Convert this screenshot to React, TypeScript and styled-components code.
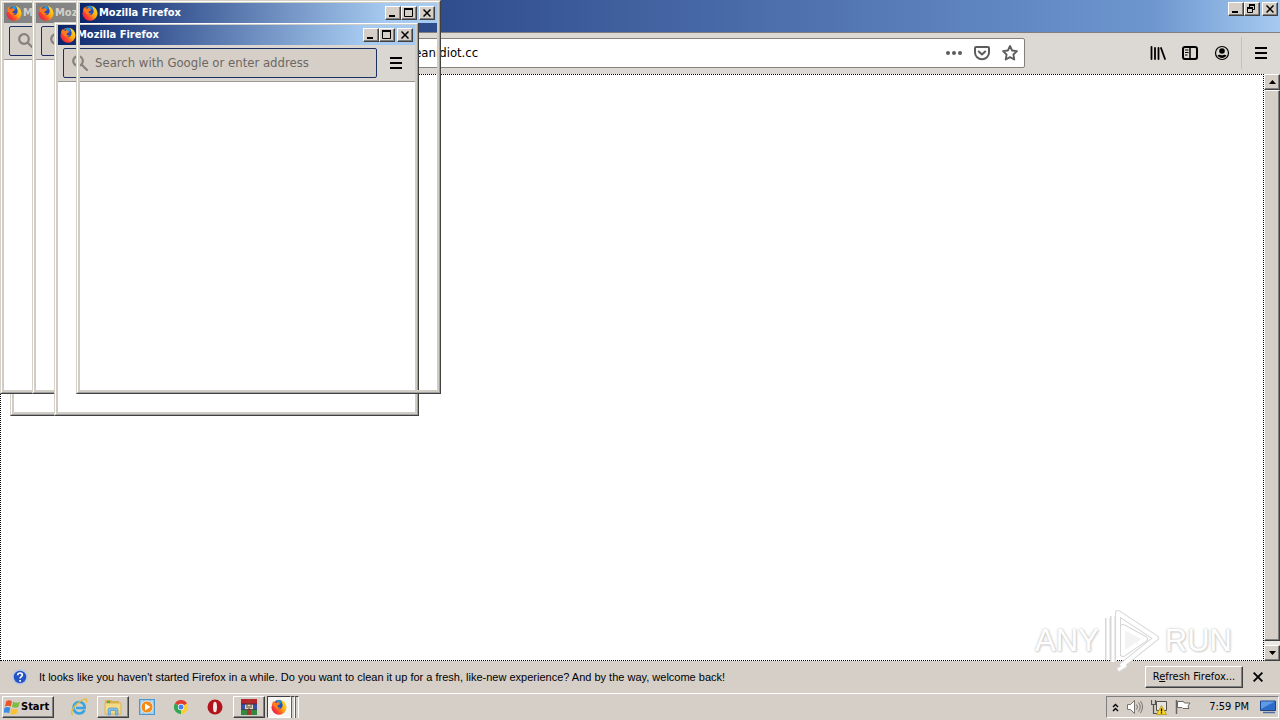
import React, { useId } from 'react';
import styled, { createGlobalStyle, css } from 'styled-components';

const FACE = '#d6cfc8';
const TAHOMA = "'DejaVu Sans Condensed', 'DejaVu Sans', sans-serif";

const GlobalStyle = createGlobalStyle`
  *, *::before, *::after { box-sizing: border-box; }
  body { margin: 0; background: #fff; font: 11px/14px ${TAHOMA}; color: #000; overflow: hidden; }
  button, input { font: inherit; color: inherit; }
`;

const raised = css`
  border: 1px solid;
  border-color: #fff #404040 #404040 #fff;
  box-shadow: inset -1px -1px #808080;
`;

const Desktop = styled.div`
  position: relative;
  display: flex;
  flex-direction: column;
  height: 100vh;
  overflow: hidden;
`;

/* ---------- main browser window ---------- */

const Browser = styled.main`
  flex: 1;
  min-height: 0;
  display: flex;
  flex-direction: column;
`;

const BrowserTitle = styled.header`
  display: flex;
  justify-content: flex-end;
  height: 33px;
  padding: 2px 2px 0 0;
  border-bottom: 1px solid #808080;
  background: linear-gradient(to right, #0a246a 0, #2f4c8c 34%, #5d82bd 75%, #6d96cf 90%, #a6caf0 100%);
`;

const Controls = styled.div`
  display: flex;
  margin-left: auto;
`;

const CaptionButton = styled.button<{ $gap?: boolean }>`
  ${raised}
  display: grid;
  place-items: center;
  width: 16px;
  height: 14px;
  padding: 0;
  margin-left: ${(p) => (p.$gap ? 2 : 0)}px;
  background: ${FACE};
`;

const NavBar = styled.nav`
  display: flex;
  align-items: center;
  height: 41px;
  padding: 0 9px 1px 160px;
  background: #dcd8d3;
`;

const UrlBox = styled.div`
  flex: 1;
  display: flex;
  align-items: center;
  gap: 8px;
  height: 30px;
  padding: 0 4px 0 220px;
  border: 1px solid #858079;
  border-radius: 2px;
  background: #fff;
  color: #5c5c5c;
`;

const UrlInput = styled.input`
  flex: 1;
  min-width: 0;
  padding: 0;
  border: 0;
  outline: 0;
  background: none;
  font-size: 13px;
  color: #000;
`;

const IconButton = styled.button`
  display: grid;
  place-items: center;
  width: 20px;
  height: 24px;
  padding: 0;
  border: 0;
  background: none;
`;

const Tools = styled.div`
  display: flex;
  align-items: center;
  gap: 12px;
  padding: 0 9px 0 123px;
`;

const MenuSlot = styled.div`
  height: 32px;
  display: flex;
  align-items: center;
  padding-left: 9px;
  border-left: 1px solid #c4c0ba;
`;

const Viewport = styled.section`
  flex: 1;
  min-height: 0;
  display: flex;
`;

const Page = styled.div`
  flex: 1;
  border: 1px dotted #000;
  background: #fff;
`;

const ScrollBar = styled.div`
  display: flex;
  flex-direction: column;
  width: 16px;
  background: #ebe8e4;
`;

const ScrollButton = styled.button`
  ${raised}
  display: grid;
  place-items: center;
  width: 16px;
  height: 16px;
  padding: 0;
  background: ${FACE};
`;

const Thumb = styled.div`
  ${raised}
  flex: 1;
  margin-bottom: 4px;
  background: ${FACE};
`;

const Notice = styled.aside`
  display: flex;
  align-items: center;
  height: 32px;
  padding: 0 12px;
  background: ${FACE};
`;

const NoticeText = styled.p`
  flex: 1;
  margin: 0 0 0 11px;
  font-family: 'Liberation Sans', ${TAHOMA};
  white-space: nowrap;
`;

const RefreshButton = styled.button`
  ${raised}
  height: 22px;
  width: 98px;
  padding: 0;
  margin-right: 5px;
  background: ${FACE};
  white-space: nowrap;
`;

/* ---------- popup windows ---------- */

const Popup = styled.section<{ $x: number; $y: number; $ghost?: boolean }>`
  position: absolute;
  left: ${(p) => p.$x}px;
  top: ${(p) => p.$y}px;
  display: flex;
  flex-direction: column;
  width: 365px;
  height: 394px;
  border: 1px solid;
  border-color: #d6d2c8 #404040 #404040 #d6d2c8;
  background: ${(p) => (p.$ghost ? 'transparent' : '#fff')};
`;

const Frame = styled.div`
  flex: 1;
  display: flex;
  flex-direction: column;
  border: 1px solid;
  border-color: #fff #a0a0a0 #a0a0a0 #fff;
`;

const Inner = styled.div`
  flex: 1;
  display: flex;
  flex-direction: column;
  border: 2px solid #cfcdc6;
  border-top-width: 1px;
`;

const PopupTitle = styled.header<{ $active: boolean }>`
  display: flex;
  align-items: center;
  height: 20px;
  padding: 0 2px;
  color: ${(p) => (p.$active ? '#fff' : '#d4d0c8')};
  background: ${(p) =>
    p.$active
      ? 'linear-gradient(to right, #0a246a 0, #a6caf0 86%)'
      : 'linear-gradient(to right, #808080, #c0c0c0)'};
`;

const PopupName = styled.h2`
  margin: 0 0 0 1px;
  font: bold 11px/14px ${TAHOMA};
  white-space: nowrap;
`;

const PopupBar = styled.div`
  display: flex;
  align-items: center;
  gap: 9px;
  height: 37px;
  padding: 0 9px 0 5px;
  border-bottom: 1px solid #9c9890;
  background: #dad7d2;
`;

const SearchBox = styled.label`
  flex: 1;
  display: flex;
  align-items: center;
  gap: 6px;
  height: 30px;
  padding: 0 7px;
  border: 1px solid #1c2f63;
  border-radius: 2px;
  background: ${FACE};
  color: #86817b;
`;

const SearchInput = styled.input`
  flex: 1;
  min-width: 0;
  padding: 0;
  border: 0;
  outline: 0;
  background: none;
  font-size: 13px;
  &::placeholder { color: #6b6863; opacity: 1; }
`;

/* ---------- taskbar ---------- */

const Taskbar = styled.footer`
  display: flex;
  align-items: center;
  height: 27px;
  padding: 0 1px 0 2px;
  border-top: 1px solid #fff;
  background: ${FACE};
`;

const StartButton = styled.button`
  ${raised}
  display: flex;
  align-items: center;
  width: 52px;
  height: 22px;
  padding: 0 1px;
  margin-right: 9px;
  background: ${FACE};
  font: bold 11px/14px ${TAHOMA};
`;

const TaskButton = styled.button<{ $state?: 'open' | 'active' }>`
  display: grid;
  place-items: center;
  width: 32px;
  height: 22px;
  margin-right: 2px;
  padding: 0;
  border: 0;
  background: none;
  ${(p) => p.$state === 'open' && raised}
  ${(p) =>
    p.$state === 'active' &&
    css`
      width: 24px;
      margin-right: 0;
      border: 1px solid;
      border-color: #404040 #fff #fff #404040;
      background: #f6f5f3;
    `}
`;

const StackEdge = styled.span`
  width: 4px;
  height: 22px;
  border-top: 1px solid #404040;
  border-right: 1px solid #fff;
  border-left: 1px solid #606060;
`;

const Tray = styled.div`
  display: flex;
  align-items: center;
  gap: 8px;
  height: 22px;
  margin-left: auto;
  padding: 0 2px 0 5px;
  border: 1px solid;
  border-color: #808080 #fff #fff #808080;
`;

const Clock = styled.time`
  margin: 0 3px 0 10px;
  white-space: nowrap;
`;

const Watermark = styled.div`
  position: absolute;
  right: 48px;
  bottom: 46px;
  display: flex;
  align-items: center;
  gap: 4px;
  font: 31px/40px 'Liberation Sans', sans-serif;
  color: #fff;
  text-shadow: 0 0 1px #ccc, 0 0 3px #ccc, 1px 1px 2px #d0d0d0;
  pointer-events: none;
`;

/* ---------- icons ---------- */

const FirefoxIcon = () => {
  const id = useId();
  return (
    <svg width="16" height="16" viewBox="0 0 16 16" aria-hidden="true">
      <defs>
        <linearGradient id={id} x1="1" y1="0.1" x2="0.1" y2="0.8">
          <stop offset="0" stopColor="#ffe62a" />
          <stop offset="0.45" stopColor="#ffa812" />
          <stop offset="0.75" stopColor="#ff4a28" />
          <stop offset="1" stopColor="#e8204a" />
        </linearGradient>
      </defs>
      <circle cx="8" cy="8.300" r="7.500" fill={`url(#${id})`} />
      <path d="M3.500 3.700C4.500 1.700 6.500.5 8.800 1c1.500.4 2.100 1.800 2.300 3 .6 1.200.7 2.600.1 3.900-.7 1.500-2.300 2.400-3.900 2L5.700 8.500 4.500 6z" fill="#1f4fc0" />
      <path d="M5.500 1.800C7 .8 8.800.8 10 2l.7 2.200L8.300 4.800z" fill="#1996e0" />
      <path d="M1.300 5.500C1.300 4 1.600 2.800 2.300 1.800c.2 1 .6 1.500 1.200 1.900 1-.3 1.800-.2 2.400.1.300-.7.9-1.300 1.600-1.500-.2 1.100.3 1.900 1.500 2.500.2.700-.8 1.100-1.700 1.200-.5.400-.5 1-.9 1.500.8 1 1.900 1.100 3.100.8-.8 1.500-2.500 2.100-4 1.500z" fill="#ff7a1c" />
    </svg>
  );
};

const MenuIcon = () => (
  <svg width="12" height="12" viewBox="0 0 12 12" aria-hidden="true">
    <path d="M0 1h12M0 6h12M0 11h12" stroke="#000" strokeWidth="2" />
  </svg>
);

const MinIcon = () => (
  <svg width="12" height="10" viewBox="0 0 12 10" aria-hidden="true">
    <path d="M2 8h6" stroke="#000" strokeWidth="2" />
  </svg>
);

const MaxIcon = () => (
  <svg width="12" height="10" viewBox="0 0 12 10" aria-hidden="true">
    <path d="M1.500 1v7.500h8V1M1 1h9" fill="none" stroke="#000" />
    <path d="M1 1h9" stroke="#000" strokeWidth="2" />
  </svg>
);

const RestoreIcon = () => (
  <svg width="12" height="10" viewBox="0 0 12 10" aria-hidden="true">
    <path d="M3.500 3V1h5v4.500H7M1.500 4v4.500h5V4" fill="none" stroke="#000" />
    <path d="M3 1h6M1 4h6" stroke="#000" strokeWidth="2" />
  </svg>
);

const CloseIcon = ({ size = 8 }: { size?: number }) => (
  <svg width={size} height={size} viewBox="0 0 8 8" aria-hidden="true">
    <path d="M.5.500l7 7M7.500.5l-7 7" stroke="#000" strokeWidth="1.500" />
  </svg>
);

const ArrowIcon = ({ down }: { down?: boolean }) => (
  <svg width="7" height="4" viewBox="0 0 7 4" aria-hidden="true">
    <path d={down ? 'M0 0h7L3.500 4z' : 'M0 4h7L3.500 0z'} />
  </svg>
);

const MagnifierIcon = () => (
  <svg width="18" height="18" viewBox="0 0 18 18" fill="none" stroke="currentColor" strokeWidth="2.200" aria-hidden="true">
    <circle cx="7" cy="7" r="4.800" />
    <path d="M10.500 10.500l5.500 5.500" strokeLinecap="round" />
  </svg>
);

const DotsIcon = () => (
  <svg width="16" height="4" viewBox="0 0 16 4" fill="#5c5c5c" aria-hidden="true">
    <circle cx="2" cy="2" r="2" />
    <circle cx="8" cy="2" r="2" />
    <circle cx="14" cy="2" r="2" />
  </svg>
);

const PocketIcon = () => (
  <svg width="16" height="16" viewBox="0 0 16 16" fill="none" stroke="#5c5c5c" strokeWidth="2" strokeLinecap="round" strokeLinejoin="round" aria-hidden="true">
    <path d="M2 2h12a1 1 0 0 1 1 1v4.500a7 6.700 0 0 1-14 0V3a1 1 0 0 1 1-1z" />
    <path d="M4.800 6.500L8 9.500l3.200-3" />
  </svg>
);

const StarIcon = () => (
  <svg width="16" height="16" viewBox="0 0 16 16" fill="none" stroke="#5c5c5c" strokeWidth="1.800" strokeLinejoin="round" aria-hidden="true">
    <path d="M8 1l2.100 4.500 4.900.6-3.600 3.400.9 5L8 12.100l-4.300 2.400.9-5L1 6.100l4.900-.6z" />
  </svg>
);

const LibraryIcon = () => (
  <svg width="16" height="16" viewBox="0 0 16 16" fill="none" stroke="#000" aria-hidden="true">
    <path d="M1.500 2v12M5 3v11M8.500 3v11M11 3l4 11" strokeWidth="1.800" strokeLinecap="round" />
  </svg>
);

const SidebarIcon = () => (
  <svg width="16" height="16" viewBox="0 0 16 16" fill="none" stroke="#000" aria-hidden="true">
    <rect x="1" y="2" width="14" height="12" rx="2" strokeWidth="2" />
    <path d="M8 2v12" strokeWidth="1.500" />
    <path d="M3 5h3.500M3 7.500h3.500M3 10h2.500" />
  </svg>
);

const AccountIcon = () => (
  <svg width="16" height="16" viewBox="0 0 16 16" aria-hidden="true">
    <circle cx="8" cy="8" r="6.500" fill="none" stroke="#000" strokeWidth="1.200" />
    <circle cx="8" cy="6" r="2.800" />
    <path d="M3.500 10.500c1.300-1.200 2.200-.8 3-.5 1 .3 2 .3 3 0 .8-.3 1.700-.7 3 .5-1 1.600-2.700 2.400-4.500 2.400s-3.500-.8-4.500-2.400z" />
  </svg>
);

const HelpIcon = () => (
  <svg width="16" height="16" viewBox="0 0 16 16" aria-hidden="true">
    <circle cx="8" cy="8" r="7" fill="#2453c4" stroke="#b9c6e4" strokeWidth="1.500" />
    <path d="M5.700 6.200C5.800 3.200 10.400 3.400 10.300 6c0 1.600-2.200 1.700-2.200 3.500M8.100 11v1.800" fill="none" stroke="#fff" strokeWidth="1.700" />
  </svg>
);

const WindowsIcon = () => (
  <svg width="17" height="17" viewBox="1 1 15 14" aria-hidden="true">
    <path d="M3 2.500c2-1.200 3.500-.9 5 0L7 7.200c-1.700-1-3.200-1-5.200 0z" fill="#e8562a" />
    <path d="M9 3c2 1 3.700 1 6 0l-1.300 4.600c-2 1-3.600.9-5.700 0z" fill="#7dbb42" />
    <path d="M1.500 8.300c2-1.100 3.500-.9 5.100 0l-1.100 4.800c-1.800-1-3.300-1-5.300 0z" fill="#3b8ede" />
    <path d="M7.600 8.800c2 1 3.600 1 5.800 0L12 13.500c-2 1-3.500.9-5.600 0z" fill="#fbc22f" />
  </svg>
);

const IeIcon = () => (
  <svg width="18" height="18" viewBox="0 0 18 18" fill="none" aria-hidden="true">
    <path d="M14.500 12.200c-1 2-3 3.300-5.300 3.300A5.800 5.800 0 0 1 3.500 9.700c0-3.400 2.400-5.700 5.700-5.700 3.400 0 5.700 2.500 5.500 6H6" stroke="#38a3e0" strokeWidth="2.600" />
    <path d="M3 16.500C.5 16.500 1.500 12 5 8S15-.5 16.500 1.500c.5.800.2 2-.5 3.200" stroke="#e6bb3c" strokeWidth="1.400" />
  </svg>
);

const FolderIcon = () => (
  <svg width="18" height="18" viewBox="0 0 18 18" aria-hidden="true">
    <path d="M1 3l1-1h5l1 1h7v4H1z" fill="#d9ad4b" />
    <path d="M1 5h16v11H1z" fill="#f4d987" stroke="#dbb259" />
    <path d="M3 3h3v2H3z" fill="#4fae4a" />
    <path d="M4 17v-5q0-2 2-2h6q2 0 2 2v5h-2.500v-4.500h-5V17z" fill="#7dbde8" stroke="#4b91c6" strokeWidth=".6" />
  </svg>
);

const MediaIcon = () => (
  <svg width="16" height="16" viewBox="0 0 16 16" aria-hidden="true">
    <rect x=".5" y=".5" width="15" height="15" fill="#8cc5ec" stroke="#4b97cf" />
    <path d="M3 1v14M13 1v14" stroke="#cfe7f7" />
    <circle cx="8" cy="8" r="6" fill="#f58a16" stroke="#fff" strokeWidth=".7" />
    <path d="M6 4.500v7L11.500 8z" fill="#fff" />
  </svg>
);

const ChromeIcon = () => (
  <svg width="14" height="14" viewBox="0 0 14 14" aria-hidden="true">
    <path d="M7 7L.9 3.500A7 7 0 0 1 13.100 3.500z" fill="#e33b2e" />
    <path d="M7 7L13.100 3.500A7 7 0 0 1 7 14z" fill="#fccd36" />
    <path d="M7 7v7A7 7 0 0 1 .9 3.500z" fill="#31a752" />
    <circle cx="7" cy="7" r="3.200" fill="#fff" />
    <circle cx="7" cy="7" r="2.500" fill="#4182ee" />
  </svg>
);

const OperaIcon = () => (
  <svg width="16" height="16" viewBox="0 0 16 16" aria-hidden="true">
    <circle cx="8" cy="8" r="7.500" fill="#b3141c" />
    <ellipse cx="8" cy="8" rx="2" ry="5.300" fill="#f2e9e8" />
  </svg>
);

const WinrarIcon = () => (
  <svg width="18" height="18" viewBox="0 0 18 18" aria-hidden="true">
    <path d="M1 1h16v5H1z" fill="#b8242c" />
    <path d="M1 6h16v5.500H1z" fill="#3b4fa8" />
    <path d="M1 11.500h16V17H1z" fill="#2e8a3e" />
    <path d="M7 1h4v16H7z" fill="#b0302c" />
    <path d="M5 6.500h8v5H5z" fill="#e3d9b4" />
    <path d="M7 6.500V10M9 8v3.500M11 6.500V10" stroke="#444" />
    <path d="M1 6h16M1 11.500h16" stroke="#2a2a3a" strokeWidth=".7" />
  </svg>
);

const ChevronsIcon = () => (
  <svg width="7" height="9" viewBox="0 0 7 9" fill="none" stroke="#000" strokeWidth="1.400" aria-hidden="true">
    <path d="M1 4l2.500-2.500L6 4M1 8l2.500-2.500L6 8" />
  </svg>
);

const SpeakerIcon = () => (
  <svg width="16" height="16" viewBox="0 0 16 16" fill="none" stroke="#77736e" aria-hidden="true">
    <path d="M.5 5.500h3l4-4v13l-4-4h-3z" fill="#fff" />
    <path d="M9.500 5.500q2 2.500 0 5M11.500 3.500q3.500 4.500 0 9M13.500 2q4 6 0 12" />
  </svg>
);

const NetworkIcon = () => (
  <svg width="16" height="16" viewBox="0 0 16 16" aria-hidden="true">
    <path d="M5.500 2.500h10v9h-10z" fill="#e6e4e0" stroke="#55524e" />
    <path d="M.5 1v4.500h4V1M2.500 5.500v9h4" fill="none" stroke="#55524e" strokeWidth="1.200" />
    <path d="M10.500 6.500l5 9h-10z" fill="#fbd72b" stroke="#b49210" strokeWidth=".8" />
    <path d="M10.500 9.500v3M10.500 13.300v1.200" stroke="#000" strokeWidth="1.300" />
  </svg>
);

const FlagIcon = () => (
  <svg width="16" height="16" viewBox="0 0 16 16" aria-hidden="true">
    <path d="M1.500 1v14" stroke="#6b6762" strokeWidth="1.500" />
    <path d="M2.500 2.500h6l1 1.500h5.500l-2 3 1 2.500H8L7 8.500H2.500z" fill="#fff" stroke="#6b6762" />
  </svg>
);

const ShowDesktopIcon = () => (
  <svg width="16" height="14" viewBox="0 0 16 14" aria-hidden="true">
    <path d="M.5 1h15v9.500H.5z" fill="#2e6cc8" stroke="#1c4488" />
    <path d="M1 1.500h14L1 9z" fill="#5d9be6" />
    <path d="M3 12.500h12" stroke="#4d6ea3" strokeWidth="1.500" />
  </svg>
);

const PlayMark = () => (
  <svg width="58" height="66" viewBox="0 0 58 66" fill="none" strokeLinejoin="round" aria-hidden="true">
    <g stroke="#d8d7d6" strokeWidth="6">
      <path d="M15 48V5l38 25-35 28" />
      <path d="M20 19v27l22-15z" />
      <path d="M5 10v42M10 8v46M15 62l8-5" />
    </g>
    <g stroke="#fff" strokeWidth="4">
      <path d="M15 48V5l38 25-35 28" />
      <path d="M20 19v27l22-15z" fill="#f3f3f3" />
      <path d="M5 10v42M10 8v46M15 62l8-5" strokeWidth="3" />
    </g>
  </svg>
);

/* ---------- composition ---------- */

const WindowControls = ({ restore }: { restore?: boolean }) => (
  <Controls>
    <CaptionButton aria-label="Minimize"><MinIcon /></CaptionButton>
    <CaptionButton aria-label={restore ? 'Restore' : 'Maximize'}>{restore ? <RestoreIcon /> : <MaxIcon />}</CaptionButton>
    <CaptionButton aria-label="Close" $gap><CloseIcon /></CaptionButton>
  </Controls>
);

type PopupProps = { x: number; y: number; active?: boolean; ghost?: boolean };

const FirefoxPopup = ({ x, y, active = false, ghost }: PopupProps) => (
  <Popup $x={x} $y={y} $ghost={ghost}>
    <Frame>
      <Inner>
        <PopupTitle $active={active}>
          <FirefoxIcon />
          <PopupName>Mozilla Firefox</PopupName>
          <WindowControls />
        </PopupTitle>
        {!ghost && (
          <PopupBar>
            <SearchBox>
              <MagnifierIcon />
              <SearchInput aria-label="Address" placeholder="Search with Google or enter address" />
            </SearchBox>
            <IconButton aria-label="Menu"><MenuIcon /></IconButton>
          </PopupBar>
        )}
      </Inner>
    </Frame>
  </Popup>
);

const popups: PopupProps[] = [
  { x: 10, y: 22 },
  { x: 0, y: 0 },
  { x: 32, y: 0 },
  { x: 54, y: 22, active: true },
  { x: 76, y: 0, active: true, ghost: true },
];

export default function App() {
  return (
    <Desktop>
      <GlobalStyle />
      <Browser>
        <BrowserTitle><WindowControls restore /></BrowserTitle>
        <NavBar>
          <UrlBox>
            <UrlInput aria-label="Location" defaultValue="youareanidiot.cc" />
            <IconButton aria-label="Page actions"><DotsIcon /></IconButton>
            <IconButton aria-label="Save to Pocket"><PocketIcon /></IconButton>
            <IconButton aria-label="Bookmark this page"><StarIcon /></IconButton>
          </UrlBox>
          <Tools>
            <IconButton aria-label="Library"><LibraryIcon /></IconButton>
            <IconButton aria-label="Sidebars"><SidebarIcon /></IconButton>
            <IconButton aria-label="Account"><AccountIcon /></IconButton>
          </Tools>
          <MenuSlot><IconButton aria-label="Menu"><MenuIcon /></IconButton></MenuSlot>
        </NavBar>
        <Viewport>
          <Page />
          <ScrollBar>
            <ScrollButton aria-label="Scroll up"><ArrowIcon /></ScrollButton>
            <Thumb />
            <ScrollButton aria-label="Scroll down"><ArrowIcon down /></ScrollButton>
          </ScrollBar>
        </Viewport>
        <Notice>
          <HelpIcon />
          <NoticeText>
            It looks like you haven't started Firefox in a while. Do you want to clean it up for a fresh, like-new experience? And by the way, welcome back!
          </NoticeText>
          <RefreshButton>R<u>e</u>fresh Firefox...</RefreshButton>
          <IconButton aria-label="Dismiss"><CloseIcon size={10} /></IconButton>
        </Notice>
      </Browser>
      <Taskbar>
        <StartButton><WindowsIcon />Start</StartButton>
        <TaskButton aria-label="Internet Explorer"><IeIcon /></TaskButton>
        <TaskButton aria-label="Explorer" $state="open"><FolderIcon /></TaskButton>
        <TaskButton aria-label="Media Player"><MediaIcon /></TaskButton>
        <TaskButton aria-label="Chrome"><ChromeIcon /></TaskButton>
        <TaskButton aria-label="Opera"><OperaIcon /></TaskButton>
        <TaskButton aria-label="WinRAR" $state="open"><WinrarIcon /></TaskButton>
        <TaskButton aria-label="Firefox" $state="active"><FirefoxIcon /></TaskButton>
        <StackEdge />
        <StackEdge />
        <Tray>
          <ChevronsIcon />
          <SpeakerIcon />
          <NetworkIcon />
          <FlagIcon />
          <Clock>7:59 PM</Clock>
          <ShowDesktopIcon />
        </Tray>
      </Taskbar>
      <Watermark>
        <span>ANY</span>
        <PlayMark />
        <span>RUN</span>
      </Watermark>
      {popups.map((p, i) => <FirefoxPopup key={i} {...p} />)}
    </Desktop>
  );
}
